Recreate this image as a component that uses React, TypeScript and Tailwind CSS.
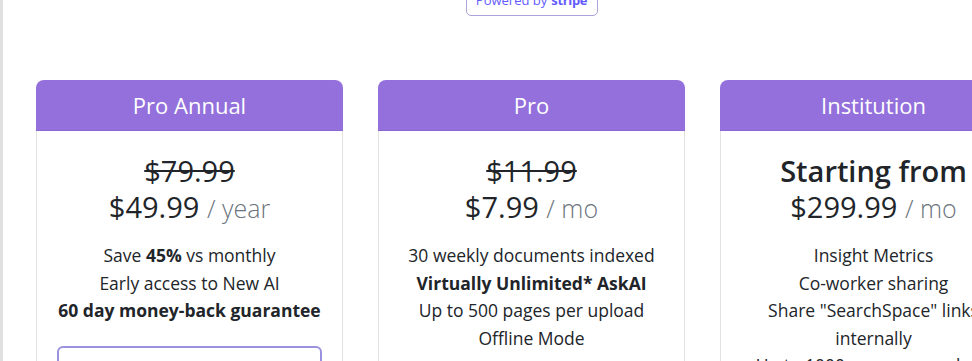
import React from "react";

type Plan = {
  title: string;
  strike?: string;
  lead?: string;
  price: string;
  unit: string;
  features: React.ReactNode[];
  button: string;
};

const plans: Plan[] = [
  {
    title: "Pro Annual",
    strike: "$79.99",
    price: "$49.99",
    unit: "/ year",
    features: [
      <>Save <b className="font-bold">45%</b> vs monthly</>,
      <>Early access to New AI</>,
      <b className="font-bold">60 day money-back guarantee</b>,
    ],
    button: "Get started",
  },
  {
    title: "Pro",
    strike: "$11.99",
    price: "$7.99",
    unit: "/ mo",
    features: [
      <>30 weekly documents indexed</>,
      <b className="font-bold">Virtually Unlimited* AskAI</b>,
      <>Up to 500 pages per upload</>,
      <>Offline Mode</>,
    ],
    button: "Get started",
  },
  {
    title: "Institution",
    lead: "Starting from",
    price: "$299.99",
    unit: "/ mo",
    features: [
      <>Insight Metrics</>,
      <>Co-worker sharing</>,
      <>Share "SearchSpace" links internally</>,
      <>Up to 1000 pages per upload</>,
    ],
    button: "Contact us",
  },
];

function Card({ plan }: { plan: Plan }) {
  return (
    <div className="w-[307px] shrink-0 flex flex-col">
      <div className="h-[51px] pt-[1px] bg-[#9370db] rounded-t-[8px] flex items-center justify-center text-white text-[22px] border-b border-[#8a68cf]">
        {plan.title}
      </div>
      <div className="h-[400px] border-x border-b border-[#e2e2e2] pt-[22px] px-[20px] text-center text-[#212529]">
        {plan.strike ? (
          <div className="text-[29px] leading-[36px] line-through">{plan.strike}</div>
        ) : (
          <div className="text-[29px] leading-[36px] font-semibold">{plan.lead}</div>
        )}
        <div className="text-[29px] leading-[36px]">
          {plan.price}{" "}
          <span className="text-[25px] font-light text-[#6c757d]">{plan.unit}</span>
        </div>
        <ul className="mt-[16px] text-[17.5px] leading-[27.5px]">
          {plan.features.map((f, i) => (
            <li key={i}>{f}</li>
          ))}
        </ul>
        <div className="mt-[21px] h-[46px] rounded-[6px] border-2 border-[#9a92de] flex items-center justify-center text-[18px] text-[#7b6fd0]">
          {plan.button}
        </div>
      </div>
    </div>
  );
}

export default function App() {
  return (
    <div className="w-[972px] h-[361px] overflow-hidden flex bg-white font-['Open_Sans','Noto_Sans',sans-serif]">
      <div className="w-[3px] shrink-0 bg-[#e0e0e0]" />
      <div className="pl-[33px] flex flex-col shrink-0">
        <div className="w-[991px] flex justify-center mt-[-15px]">
          <div className="h-[31px] w-[132px] rounded-[5px] border border-[#a9a4da] flex items-center justify-center gap-[4px] text-[13px] text-[#635bff]">
            <span>Powered by</span>
            <span className="font-bold tracking-tight">stripe</span>
          </div>
        </div>
        <div className="mt-[64px] flex gap-[35px]">
          {plans.map((p) => (
            <Card key={p.title} plan={p} />
          ))}
        </div>
      </div>
    </div>
  );
}
